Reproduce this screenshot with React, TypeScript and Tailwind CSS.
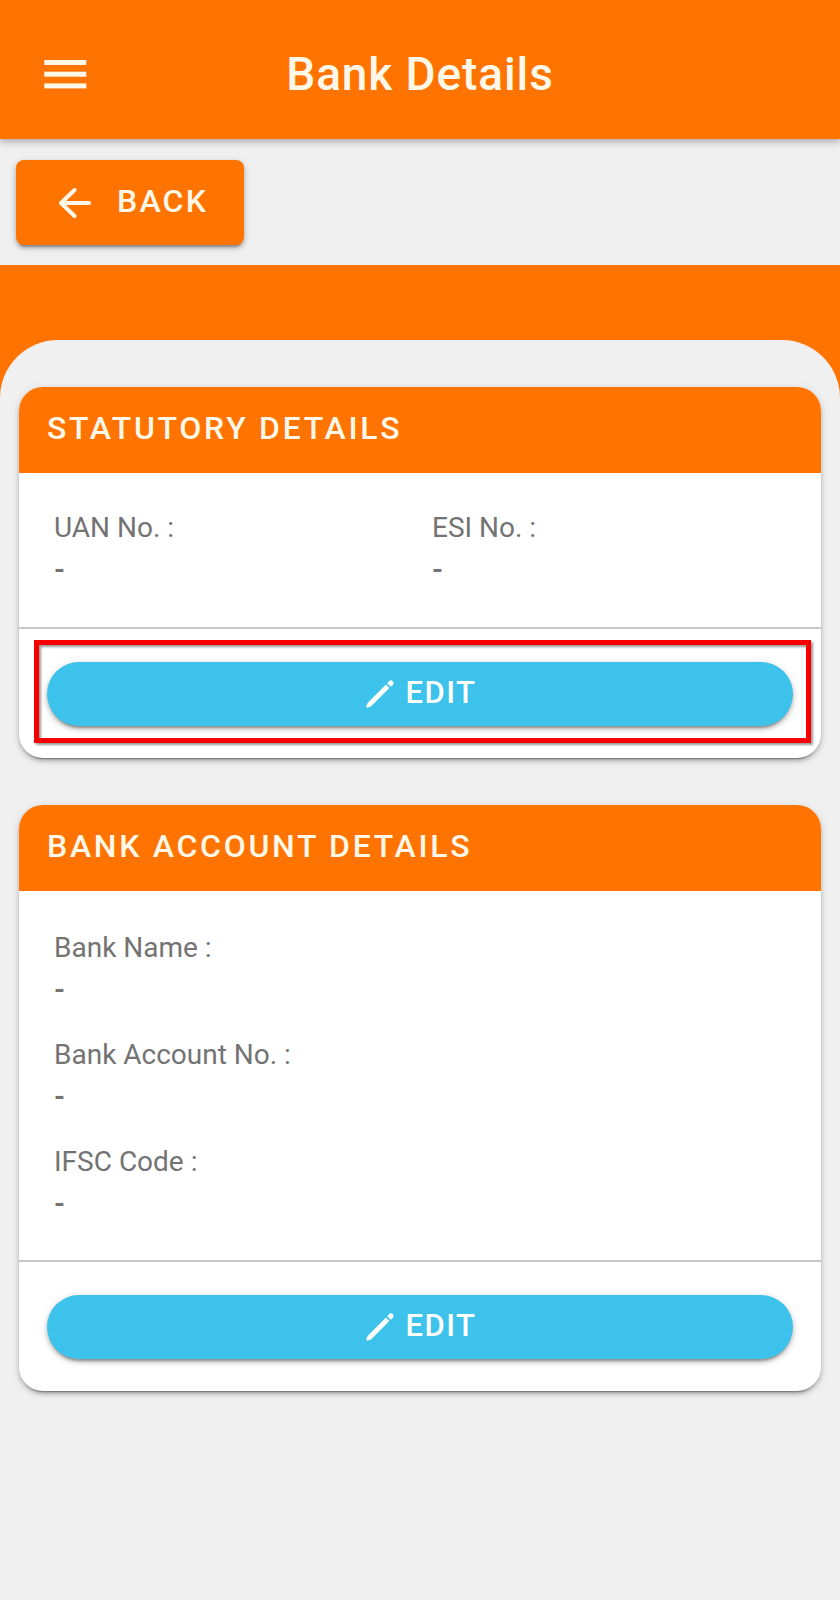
import React from 'react';

type Field = {
  label: string;
  value: string;
};

const statutoryFields: Field[] = [
  { label: 'UAN No. :', value: '-' },
  { label: 'ESI No. :', value: '-' },
];

const bankFields: Field[] = [
  { label: 'Bank Name :', value: '-' },
  { label: 'Bank Account No. :', value: '-' },
  { label: 'IFSC Code :', value: '-' },
];

const MenuIcon = () => (
  <svg width="43" height="29" viewBox="0 0 43 29" fill="currentColor">
    <rect x="0.3" y="0" width="42" height="5" />
    <rect x="0.3" y="11.7" width="42" height="5" />
    <rect x="0.3" y="23.4" width="42" height="5" />
  </svg>
);

const ArrowBackIcon = () => (
  <svg
    width="32"
    height="30"
    viewBox="0 0 32 30"
    fill="none"
    stroke="currentColor"
    strokeWidth="4"
    strokeLinecap="round"
    strokeLinejoin="round"
  >
    <path d="M15.5 2 2 15l13.5 13M2.5 15H30" />
  </svg>
);

const PencilIcon = () => (
  <svg width="28" height="28" viewBox="0 0 28 28" fill="currentColor">
    <path d="M20 4.6 1.5 23 .4 26.2c-.3.9.5 1.7 1.4 1.4l3.2-1.2L23.4 8z" />
    <path d="M26.7 1.3a2.6 2.6 0 0 0-3.7 0l-1.8 1.9 3.6 3.6 1.9-1.8a2.6 2.6 0 0 0 0-3.7z" />
  </svg>
);

const EditButton = () => (
  <button className="flex h-16 w-full items-center justify-center rounded-full bg-[#3dc2eb] pl-[2px] text-[31px] font-medium leading-none tracking-[1.5px] text-white shadow-[0_5px_2px_-3px_rgba(0,0,0,0.22),0_3px_4px_rgba(0,0,0,0.2),0_2px_9px_rgba(0,0,0,0.14)]">
    <PencilIcon />
    <span className="ml-3 -mt-[3px]">EDIT</span>
  </button>
);

const FieldItem = ({ label, value }: Field) => (
  <div className="text-[28px] leading-[42px] text-[#737373]">
    <div>{label}</div>
    <div className="font-bold">{value}</div>
  </div>
);

const DetailsCard = ({
  title,
  children,
  highlighted = false,
}: {
  title: string;
  children: React.ReactNode;
  highlighted?: boolean;
}) => (
  <section className="rounded-[24px] bg-white shadow-[0_5px_2px_-4px_rgba(0,0,0,0.4),0_3px_4px_rgba(0,0,0,0.2),0_2px_10px_rgba(0,0,0,0.12)]">
    <h2 className="flex h-[86px] items-center rounded-t-[24px] bg-[#ff7300] px-7 pb-[3.6px] text-[32px] font-medium leading-none tracking-[2.7px] text-[#fff8e8]">
      {title}
    </h2>
    <div className="border-b-2 border-[#c8c8c8] px-[35px] pb-[35px] pt-[34.4px]">{children}</div>
    <div className="relative px-7 pb-8 pt-[33px]">
      <EditButton />
      {highlighted && (
        <div className="absolute left-[15px] top-[11.6px] h-[103px] w-[777px] border-[5px] border-[#f80000] drop-shadow-[2px_2px_1px_rgba(0,0,0,0.4)]" />
      )}
    </div>
  </section>
);

const App = () => {
  return (
    <div className="flex min-h-[1600px] w-[840px] flex-col bg-[#f0f0f0] font-[Roboto,sans-serif]">
      {/* Toolbar */}
      <header className="z-10 grid h-[139px] grid-cols-[1fr_auto_1fr] items-center bg-[#ff7300] pl-[44px] pr-[44px] pt-[9px] text-[#fff8e8] shadow-[0_3px_5px_rgba(0,0,0,0.2),0_5px_10px_rgba(0,0,0,0.08)]">
        <button aria-label="Menu" className="w-[43px]">
          <MenuIcon />
        </button>
        <h1 className="text-[46px] font-medium leading-none tracking-[0.9px]">Bank Details</h1>
      </header>

      <div className="h-[126px] pl-4 pt-[21px]">
        <button className="flex h-[85px] w-[228px] items-center rounded-[8px] bg-[#ff7300] pl-[43px] text-[32px] font-medium leading-none tracking-[2.2px] text-[#fff8e8] shadow-[0_5px_2px_-3px_rgba(0,0,0,0.22),0_3px_4px_rgba(0,0,0,0.2),0_2px_9px_rgba(0,0,0,0.14)]">
          <ArrowBackIcon />
          <span className="ml-[26px] -mt-1">BACK</span>
        </button>
      </div>

      {/* Rounded sheet over the orange band */}
      <div className="flex grow flex-col bg-[linear-gradient(#ff7300_0_140px,#f0f0f0_140px)] pt-[75px]">
        <main className="flex grow flex-col gap-[47px] rounded-t-[58px] bg-[#f0f0f0] px-[19px] pt-[46.7px]">
          <DetailsCard title="STATUTORY DETAILS" highlighted>
            <div className="grid grid-cols-[378px_1fr] pb-[0.6px]">
              {statutoryFields.map((field) => (
                <FieldItem key={field.label} {...field} />
              ))}
            </div>
          </DetailsCard>
          <DetailsCard title="BANK ACCOUNT DETAILS">
            <div className="flex flex-col gap-[23.3px] pt-[1.5px]">
              {bankFields.map((field) => (
                <FieldItem key={field.label} {...field} />
              ))}
            </div>
          </DetailsCard>
        </main>
      </div>
    </div>
  );
};

export default App;
